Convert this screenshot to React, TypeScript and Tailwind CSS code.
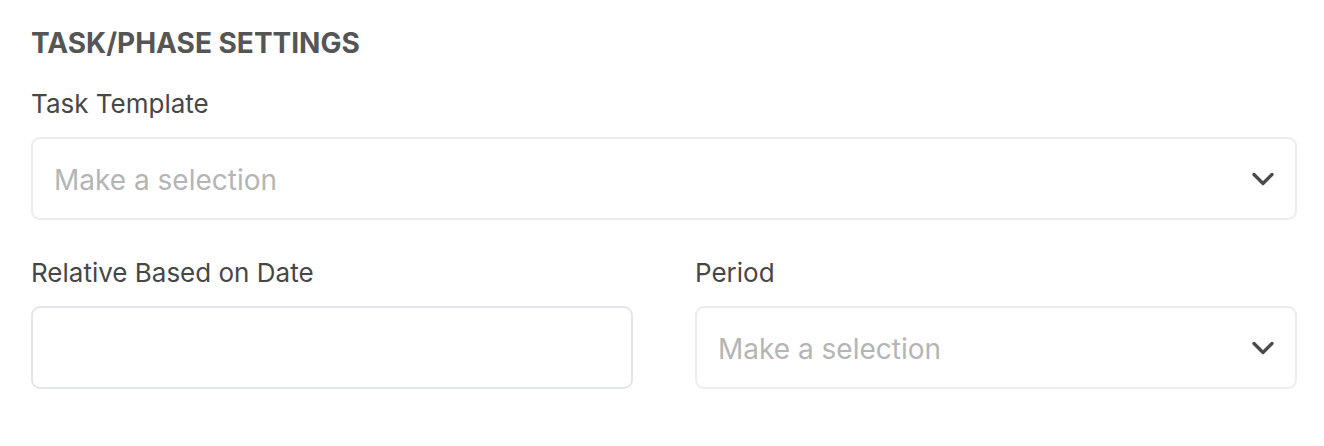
import { ChevronDown } from "lucide-react";

function SelectBox({ placeholder }: { placeholder: string }) {
  return (
    <div className="flex h-[83px] items-center justify-between rounded-[9px] border-2 border-[#ececec] bg-white pl-[21px] pr-[14px]">
      <span className="pt-[3px] text-[28px] text-[#b5b5b5]">{placeholder}</span>
      <ChevronDown className="h-[36px] w-[36px] text-[#4a4a4a]" strokeWidth={2.2} />
    </div>
  );
}

function Field({ label, children }: { label: string; children: React.ReactNode }) {
  return (
    <div className="flex flex-col">
      <label className="mb-[17px] text-[26px] leading-[32px] text-[#474747]">{label}</label>
      {children}
    </div>
  );
}

export default function App() {
  return (
    <div className="min-h-screen bg-white pl-[31px] pr-[27px] pt-[26px] font-['Inter',sans-serif]">
      <h2 className="mb-[28px] text-[28px] font-bold leading-[34px] text-[#555555]">TASK/PHASE SETTINGS</h2>
      <Field label="Task Template">
        <SelectBox placeholder="Make a selection" />
      </Field>
      <div className="mt-[37px] grid grid-cols-2 gap-[62px]">
        <Field label="Relative Based on Date">
          <input className="h-[83px] rounded-[9px] border-2 border-[#e3e6ed] bg-white px-[21px] text-[28px] outline-none" />
        </Field>
        <Field label="Period">
          <SelectBox placeholder="Make a selection" />
        </Field>
      </div>
    </div>
  );
}
